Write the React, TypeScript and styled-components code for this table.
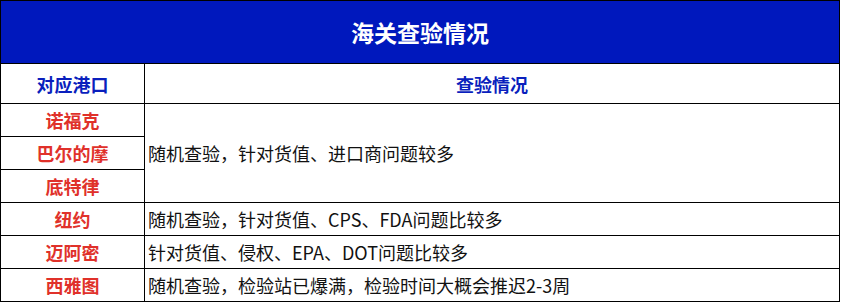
import React from "react";
import styled, { createGlobalStyle } from "styled-components";

const Global = createGlobalStyle`
  html, body { margin: 0; padding: 0; background: #ffffff; }
  body { font-family: "Noto Sans CJK SC", "Noto Sans", sans-serif; }
`;

const Table = styled.div`
  display: grid;
  grid-template-columns: 144px 695px;
  grid-template-rows: 63px 40px repeat(6, 33px);
  width: 840px;
  border-top: 1px solid #000;
  border-left: 1px solid #000;
  box-sizing: border-box;
`;

const Cell = styled.div<{ $span?: number; $rows?: number; $align?: "left" | "center" }>`
  box-sizing: border-box;
  border-right: 1px solid #000;
  border-bottom: 1px solid #000;
  display: flex;
  align-items: center;
  justify-content: ${(p) => (p.$align === "left" ? "flex-start" : "center")};
  padding-left: ${(p) => (p.$align === "left" ? "3px" : "0")};
  grid-column: ${(p) => (p.$span ? `span ${p.$span}` : "auto")};
  grid-row: ${(p) => (p.$rows ? `span ${p.$rows}` : "auto")};
  white-space: nowrap;
  line-height: 1;
`;

const TitleCell = styled(Cell)`
  background: #0018bd;
  color: #ffffff;
  font-size: 23px;
  font-weight: 700;
`;

const HeadCell = styled(Cell)`
  color: #0a1fbd;
  font-size: 18px;
  font-weight: 700;
`;

const PortCell = styled(Cell)`
  color: #e0312a;
  font-size: 18px;
  font-weight: 700;
`;

const InfoCell = styled(Cell)`
  color: #111;
  font-size: 18px;
  font-weight: 400;
`;

const rows: { ports: string[]; info: string }[] = [
  { ports: ["诺福克", "巴尔的摩", "底特律"], info: "随机查验，针对货值、进口商问题较多" },
  { ports: ["纽约"], info: "随机查验，针对货值、CPS、FDA问题比较多" },
  { ports: ["迈阿密"], info: "针对货值、侵权、EPA、DOT问题比较多" },
  { ports: ["西雅图"], info: "随机查验，检验站已爆满，检验时间大概会推迟2-3周" },
];

export default function App() {
  return (
    <>
      <Global />
      <Table>
        <TitleCell $span={2}>海关查验情况</TitleCell>
        <HeadCell>对应港口</HeadCell>
        <HeadCell>查验情况</HeadCell>
        {rows.map((r, i) => (
          <React.Fragment key={i}>
            <PortCell>{r.ports[0]}</PortCell>
            <InfoCell $align="left" $rows={r.ports.length}>
              {r.info}
            </InfoCell>
            {r.ports.slice(1).map((p) => (
              <PortCell key={p}>{p}</PortCell>
            ))}
          </React.Fragment>
        ))}
      </Table>
    </>
  );
}
